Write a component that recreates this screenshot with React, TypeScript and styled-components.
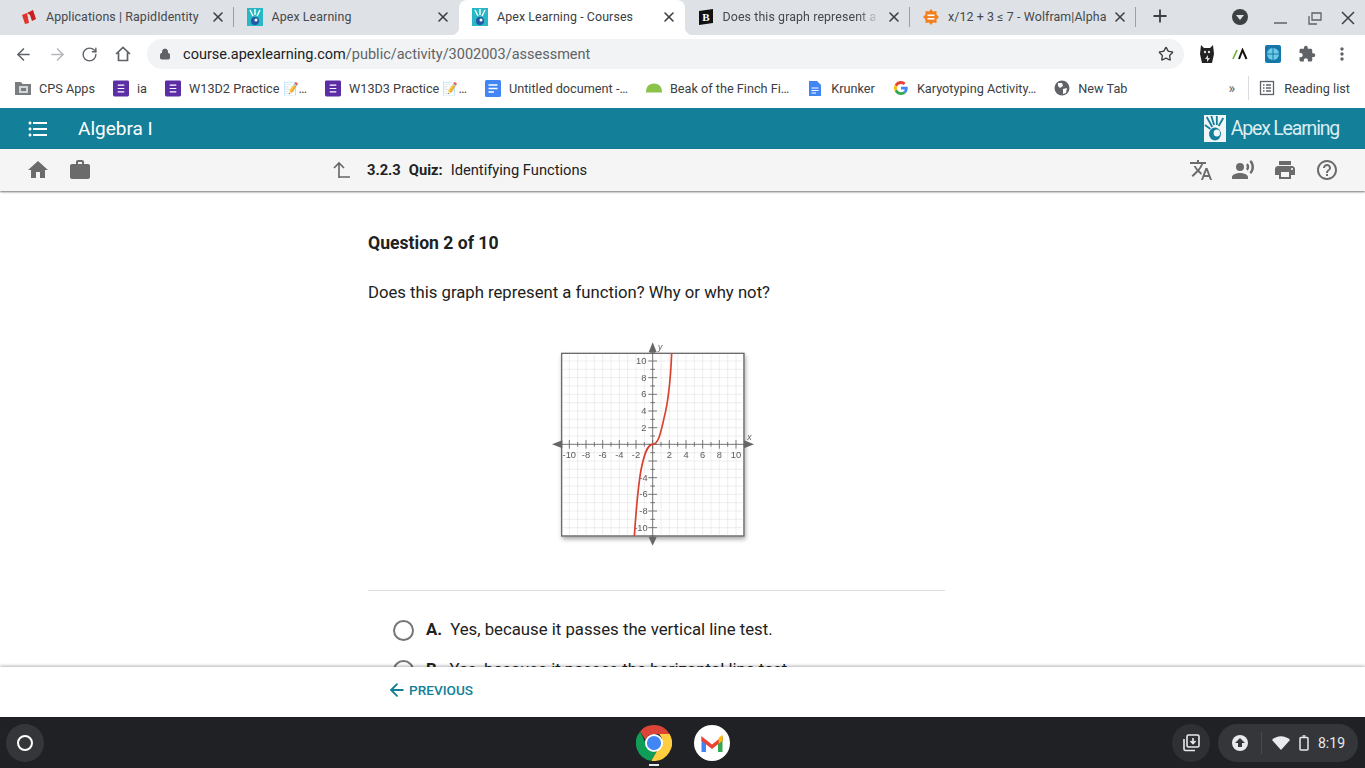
import styled, { createGlobalStyle } from 'styled-components';
import { ArrowLeft, ArrowRight, Lock, Plus, RotateCw, Star, X } from 'lucide-react';
import {
  MdExtension,
  MdFormatListBulleted,
  MdHelpOutline,
  MdHome,
  MdMoreVert,
  MdPrint,
  MdRecordVoiceOver,
  MdTranslate,
  MdWork,
} from 'react-icons/md';

const GlobalStyle = createGlobalStyle`
  html, body {
    margin: 0;
    height: 100%;
    overflow: hidden;
    background: #fff;
    font-family: Roboto, "Liberation Sans", sans-serif;
  }
`;

const Page = styled.div`
  display: flex;
  flex-direction: column;
  width: 1365px;
  height: 768px;
  overflow: hidden;
`;

/* chrome tabs */
const TabStrip = styled.div`
  display: flex;
  align-items: stretch;
  height: 35px;
  padding: 0 0 0 8px;
  background: #dee1e6;
  flex-shrink: 0;
`;

const Tab = styled.div<{ $active?: boolean }>`
  position: relative;
  display: flex;
  align-items: center;
  width: 225.5px;
  box-sizing: border-box;
  padding: 0 8px 2px 13px;
  gap: 8px;
  border-radius: 8px 8px 0 0;
  background: ${({ $active }) => ($active ? '#fff' : 'transparent')};
  color: ${({ $active }) => ($active ? '#3c4043' : '#45494d')};
  font-size: 12.4px;
  flex-shrink: 0;

  &::before,
  &::after {
    content: '';
    display: ${({ $active }) => ($active ? 'block' : 'none')};
    position: absolute;
    bottom: 0;
    width: 8px;
    height: 8px;
  }
  &::before {
    left: -8px;
    background: radial-gradient(circle at 0 0, transparent 8px, #fff 8.5px);
  }
  &::after {
    right: -8px;
    background: radial-gradient(circle at 100% 0, transparent 8px, #fff 8.5px);
  }
`;

const TabDivider = styled.span`
  position: absolute;
  top: 7px;
  right: 0;
  width: 1px;
  height: 20px;
  background: #9aa0a6;
`;

const Favicon = styled.span`
  display: flex;
  align-items: center;
  justify-content: center;
  width: 16px;
  height: 16px;
  flex-shrink: 0;
`;

const TabTitle = styled.span<{ $fade?: boolean }>`
  flex: 1;
  margin-left: 1px;
  white-space: nowrap;
  overflow: hidden;
  letter-spacing: 0.1px;
  ${({ $fade }) =>
    $fade ? 'mask-image: linear-gradient(90deg, #000 84%, transparent 97%);' : ''}
`;

const TabClose = styled(X)`
  width: 16px;
  height: 16px;
  margin-left: -6px;
  color: #3c4043;
  stroke-width: 2.4;
  flex-shrink: 0;
`;

const NewTab = styled(Plus)`
  width: 20px;
  height: 20px;
  margin: 6px 0 0 14px;
  color: #3c4043;
  stroke-width: 2.2;
`;

const WindowControls = styled.div`
  display: flex;
  align-items: center;
  margin-left: auto;
  padding: 0 9px 2px 0;
  gap: 25px;
`;

/* toolbar */
const Toolbar = styled.div`
  display: flex;
  align-items: center;
  height: 38px;
  padding: 0 13px 0 14px;
  background: #fff;
  flex-shrink: 0;
`;

const NavIcons = styled.div`
  display: flex;
  align-items: center;
  gap: 14.7px;
  color: #5f6368;
  margin-right: 14px;
`;

const Omnibox = styled.div`
  display: flex;
  align-items: center;
  flex: 1;
  height: 30px;
  padding: 0 10px 0 12px;
  border-radius: 15px;
  background: #f1f3f4;
  font-size: 14.5px;
  color: #5f6368;
`;

const UrlHost = styled.span`
  color: #202124;
`;

const UrlText = styled.span`
  flex: 1;
  margin-left: 12px;
`;

const Extensions = styled.div`
  display: flex;
  align-items: center;
  gap: 16px;
  margin-left: 14px;
  color: #5f6368;
`;

/* bookmarks */
const BookmarkBar = styled.div`
  display: flex;
  align-items: center;
  height: 35px;
  padding: 0 15px 5px 15px;
  box-sizing: border-box;
  background: #fff;
  font-size: 12.7px;
  color: #3c4043;
  flex-shrink: 0;
`;

const Bookmark = styled.div`
  display: flex;
  align-items: center;
  gap: 8px;
  margin-right: 18px;
  white-space: nowrap;
`;

const BookmarkIcon = styled.span`
  display: flex;
  align-items: center;
  justify-content: center;
  width: 16px;
  flex-shrink: 0;
`;

const BookmarkOverflow = styled.span`
  margin-left: auto;
  font-size: 14px;
  color: #5f6368;
`;

const ReadingList = styled.div`
  display: flex;
  align-items: center;
  gap: 9px;
  margin-left: 13px;
  padding-left: 10px;
  border-left: 1px solid #dadce0;
  height: 24px;
  color: #3c4043;
`;

/* apex app */
const AppBar = styled.header`
  display: flex;
  align-items: center;
  height: 41px;
  padding: 0 26px 0 26px;
  background: #137f98;
  color: #fff;
  flex-shrink: 0;
`;

const CourseTitle = styled.div`
  margin-left: 28px;
  font-size: 19px;
`;

const Logo = styled.div`
  display: flex;
  align-items: center;
  gap: 5px;
  margin-left: auto;
  font-size: 19.5px;
  letter-spacing: -1.2px;
  color: #dcecf0;
`;

const SubBar = styled.div`
  position: relative;
  z-index: 2;
  display: flex;
  align-items: center;
  height: 42px;
  padding: 0 26px;
  background: #f5f5f5;
  box-shadow: 0 1px 2px rgba(0, 0, 0, 0.55);
  color: #6b6b6b;
  flex-shrink: 0;
`;

const SubIcons = styled.div`
  display: flex;
  align-items: center;
  gap: 18px;
`;

const Crumb = styled.div`
  display: flex;
  align-items: center;
  margin-left: 239px;
  font-size: 14.7px;
  color: #212121;
`;

const CrumbStrong = styled.strong`
  font-weight: 700;
  margin-right: 8px;
`;

const CrumbUp = styled.svg`
  width: 20px;
  height: 20px;
  margin-right: 16px;
`;

const SubActions = styled.div`
  display: flex;
  align-items: center;
  gap: 18px;
  margin-left: auto;
`;

const Content = styled.main`
  flex: 1;
  min-height: 0;
  overflow: hidden;
  padding-left: 368px;
  background: #fff;
  color: #212121;
`;

const Column = styled.div`
  width: 577px;
`;

const Heading = styled.h2`
  margin: 40px 0 0;
  font-size: 17.6px;
  line-height: 24px;
  font-weight: 700;
`;

const Prompt = styled.p`
  margin: 26px 0 0;
  font-size: 16.7px;
  line-height: 24px;
`;

const Graph = styled.svg`
  display: block;
  width: 225px;
  height: 220px;
  margin: 30px 0 0 172px;
`;

const Rule = styled.hr`
  margin: 35px 0 0;
  border: 0;
  border-top: 1px solid #ddd;
`;

const Option = styled.div`
  display: flex;
  align-items: center;
  height: 24px;
  margin: 0 0 16px 25px;
  font-size: 16.75px;

  &:first-of-type {
    margin-top: 26px;
  }
`;

const Radio = styled.span`
  width: 17px;
  height: 17px;
  margin-right: 12px;
  border: 2px solid #757575;
  border-radius: 50%;
  flex-shrink: 0;
  position: relative;
  top: 1px;
`;

const OptionLetter = styled.strong`
  margin-right: 8px;
  font-weight: 700;
`;

const Footer = styled.footer`
  position: relative;
  z-index: 2;
  display: flex;
  align-items: center;
  height: 50px;
  padding: 0 0 4px 387px;
  box-sizing: border-box;
  background: #fff;
  box-shadow: 0 -1px 3px rgba(0, 0, 0, 0.3);
  flex-shrink: 0;
`;

const PrevButton = styled.div`
  display: flex;
  align-items: center;
  gap: 2px;
  color: #137f98;
  font-size: 13.6px;
  font-weight: 500;
`;

/* chromeos shelf */
const Shelf = styled.div`
  display: grid;
  grid-template-columns: 1fr auto 1fr;
  align-items: center;
  height: 51px;
  padding: 0 7px 0 6px;
  box-sizing: border-box;
  background: #202124;
  flex-shrink: 0;
`;

const Launcher = styled.div`
  display: flex;
  align-items: center;
  justify-content: center;
  width: 38px;
  height: 38px;
  border-radius: 50%;
  background: #35363a;
`;

const LauncherRing = styled.span`
  width: 12px;
  height: 12px;
  border: 2px solid #fff;
  border-radius: 50%;
`;

const ShelfApps = styled.div`
  position: relative;
  display: flex;
  align-items: center;
  gap: 22px;
  margin-left: 1px;
`;

const RunningDot = styled.span`
  position: absolute;
  left: 13px;
  bottom: -5px;
  width: 10px;
  height: 2px;
  background: #e8eaed;
`;

const Tray = styled.div`
  display: flex;
  align-items: center;
  justify-content: flex-end;
  gap: 8px;
`;

const HoldingSpace = styled.div`
  display: flex;
  align-items: center;
  justify-content: center;
  width: 38px;
  height: 38px;
  border-radius: 50%;
  background: #2f3033;
`;

const StatusPill = styled.div`
  display: flex;
  align-items: center;
  gap: 9px;
  height: 38px;
  padding: 0 13px;
  border-radius: 19px;
  background: #35363a;
  color: #e8eaed;
  font-size: 14px;
`;

const PillDivider = styled.span`
  width: 1px;
  height: 22px;
  margin: 0 1px 0 3px;
  background: #4a4b4f;
`;

const RapidIcon = () => (
  <svg width="16" height="16" viewBox="0 0 16 16">
    <path d="M1 6 L6 4 L8 14 L4 15 Z" fill="#e0342b" />
    <path d="M6 4 L12 1 L15 10 L11 12 L9 6 Z" fill="#c91f1f" />
  </svg>
);

const ApexIcon = () => (
  <svg width="16" height="18" viewBox="0 0 16 18">
    <rect width="16" height="18" fill="#2ab7c4" />
    <path d="M3 2 L6 8 M8 1 L8 7 M13 2 L10 8" stroke="#fff" strokeWidth="1.4" />
    <circle cx="8" cy="13" r="4" fill="#2457a6" />
    <circle cx="9" cy="12" r="1.5" fill="#fff" />
  </svg>
);

const BrainlyIcon = () => (
  <svg width="16" height="16" viewBox="0 0 16 16">
    <path d="M1 2 L15 0 L15 14 L1 16 Z" fill="#111" />
    <text x="8" y="12" fontSize="11" fontWeight="700" textAnchor="middle" fill="#fff" fontFamily="Liberation Serif, serif">
      B
    </text>
  </svg>
);

const WolframIcon = () => (
  <svg width="16" height="16" viewBox="0 0 16 16">
    <path
      d="M8 0 L10 2.5 L13.5 2 L13.5 5.5 L16 8 L13.5 10.5 L13.5 14 L10 13.5 L8 16 L6 13.5 L2.5 14 L2.5 10.5 L0 8 L2.5 5.5 L2.5 2 L6 2.5 Z"
      fill="#f0801f"
    />
    <rect x="4.5" y="5.5" width="7" height="1.6" fill="#fff" />
    <rect x="4.5" y="9" width="7" height="1.6" fill="#fff" />
  </svg>
);

const ProfileDown = () => (
  <svg width="18" height="18" viewBox="0 0 18 18">
    <circle cx="9" cy="9" r="8" fill="#3c4043" />
    <path d="M5 7 H13 L9 12 Z" fill="#dee1e6" />
  </svg>
);

const WindowButtons = () => (
  <svg width="82" height="16" viewBox="0 0 82 16" fill="none" stroke="#5f6368" strokeWidth="1.5">
    <path d="M0 14 H13" />
    <path d="M35 7 V15 H43 M38 11 V4 H47 V11 Z" strokeWidth="1.3" />
    <path d="M68 3 L80 15 M80 3 L68 15" stroke="#3c4043" />
  </svg>
);

const HomeOutline = () => (
  <svg width="20" height="20" viewBox="0 0 20 20" fill="none" stroke="#5f6368" strokeWidth="1.7">
    <path d="M3 10 L10 3.5 L17 10 M5.5 8.5 V16.5 H14.5 V8.5" />
  </svg>
);

const BearExt = () => (
  <svg width="18" height="20" viewBox="0 0 18 20">
    <path d="M3 1 L6 4 H12 L15 1 L16 10 L14 19 H4 L2 10 Z" fill="#222" />
    <circle cx="7" cy="8" r="1.2" fill="#ddd" />
    <circle cx="11" cy="8" r="1.2" fill="#ddd" />
    <path d="M7 15 L10 11 L10 14 L12 14 L9 18 L9 15 Z" fill="#ddd" />
  </svg>
);

const SlashExt = () => (
  <svg width="16" height="12" viewBox="0 0 16 12">
    <path d="M1 11 L5 2" stroke="#7cb342" strokeWidth="1.8" />
    <path d="M7 11 L10.5 2 L14.5 11" stroke="#111" strokeWidth="2" fill="none" />
  </svg>
);

const GlobeExt = () => (
  <svg width="18" height="20" viewBox="0 0 18 20">
    <rect x="1" y="1" width="16" height="18" rx="2" fill="#1678a8" />
    <circle cx="9" cy="10" r="6" fill="#6ecbe8" />
    <path d="M3 10 H15 M9 4 V16" stroke="#1678a8" />
  </svg>
);

const SheetIcon = ({ color }: { color: string }) => (
  <svg width="17" height="17" viewBox="0 0 17 17">
    <rect width="17" height="17" rx="1.5" fill={color} />
    <path d="M5 5 H12 M5 8.5 H12 M5 12 H12" stroke="#fff" strokeWidth="1.3" />
  </svg>
);

const DocIcon = () => (
  <svg width="16" height="17" viewBox="0 0 16 17">
    <rect width="16" height="17" rx="1.5" fill="#4285f4" />
    <path d="M3.5 5 H12.5 M3.5 8.5 H12.5 M3.5 12 H9" stroke="#fff" strokeWidth="1.5" />
  </svg>
);

const DocSmall = () => (
  <svg width="12" height="16" viewBox="0 0 12 16">
    <path d="M0 1 H8 L12 5 V16 H0 Z" fill="#4285f4" />
    <path d="M2.5 8 H9.5 M2.5 10.5 H9.5 M2.5 13 H7" stroke="#fff" />
  </svg>
);

const FolderIcon = () => (
  <svg width="16" height="14" viewBox="0 0 16 14">
    <path d="M0 1 H6 L7.5 3 H16 V14 H0 Z" fill="#7a7d80" />
    <rect x="4" y="5" width="9" height="7" fill="#d4d5d6" />
    <rect x="6" y="7" width="5" height="3" fill="#7a7d80" />
  </svg>
);

const FinchIcon = () => (
  <svg width="18" height="10" viewBox="0 0 18 10">
    <path d="M0 10 C0 3 4 0 9 0 C14 0 18 3 18 10 Z" fill="#8bc34a" />
  </svg>
);

const GoogleIcon = () => (
  <svg width="14" height="14" viewBox="0 0 48 48">
    <path fill="#ea4335" d="M24 10c3.5 0 6.700 1.300 9.100 3.500l6.800-6.800C35.600 2.800 30.100 0 24 0 14.600 0 6.500 5.400 2.600 13.200l7.900 6.100C12.400 13.800 17.700 10 24 10z" />
    <path fill="#4285f4" d="M47 24.500c0-1.600-.1-3.100-.4-4.500H24v9h13c-.6 3-2.300 5.500-4.800 7.200l7.700 6C44.300 37.900 47 31.700 47 24.500z" />
    <path fill="#fbbc05" d="M10.500 28.700C10 27.200 9.700 25.600 9.700 24s.3-3.200.8-4.700l-7.900-6.100C.9 16.500 0 20.100 0 24s.9 7.500 2.600 10.800l7.900-6.100z" />
    <path fill="#34a853" d="M24 48c6.500 0 11.900-2.100 15.900-5.800l-7.700-6c-2.200 1.400-4.900 2.300-8.200 2.300-6.300 0-11.600-3.800-13.500-9.800l-7.900 6.100C6.500 42.600 14.600 48 24 48z" />
  </svg>
);

const GlobeIcon = () => (
  <svg width="16" height="16" viewBox="0 0 16 16">
    <circle cx="8" cy="8" r="7.500" fill="#5f6368" />
    <path d="M4 3 L8 3 L9 6 L6 8 L4 6 Z M9 9 L13 8 L12 13 L9 14 Z" fill="#fff" />
  </svg>
);

const ListBox = () => (
  <svg width="16" height="16" viewBox="0 0 16 16" fill="none" stroke="#5f6368" strokeWidth="1.3">
    <rect x="1.500" y="1.500" width="13" height="13" />
    <path d="M4 5 H5.500 M7 5 H12 M4 8 H5.500 M7 8 H12 M4 11 H5.500 M7 11 H12" />
  </svg>
);

const ApexHand = () => (
  <svg width="22" height="27" viewBox="0 0 24 27" preserveAspectRatio="none">
    <rect width="24" height="27" fill="#f0f6f7" />
    <path d="M3 2 L9 12 M8 1 L11 10 M14 1 L14 10 M21 3 L16 11 M1 10 L7 14" stroke="#137f98" strokeWidth="2" />
    <circle cx="12" cy="19" r="6.500" fill="#137f98" />
    <circle cx="14" cy="18" r="3.500" fill="#f0f6f7" />
  </svg>
);

const GRID_VALUES = Array.from({ length: 23 }, (_, i) => i - 11);
const LABELS = [-10, -8, -6, -4, -2, 2, 4, 6, 8, 10];

const PlotGraph = () => (
  <Graph viewBox="0 0 675 660">
    <defs>
      <filter id="soft" x="-10%" y="-10%" width="120%" height="125%">
        <feDropShadow dx="3" dy="8" stdDeviation="7" floodColor="#000" floodOpacity="0.35" />
      </filter>
      <filter id="blur">
        <feGaussianBlur stdDeviation="1.1" />
      </filter>
    </defs>
    <rect x="65" y="55" width="547" height="548" fill="#fff" stroke="#666" strokeWidth="3" filter="url(#soft)" />
    {GRID_VALUES.map((v) => (
      <g key={v} stroke="#dcdcdc" strokeWidth="1.5">
        <line x1={338 + v * 25} y1="55" x2={338 + v * 25} y2="603" />
        <line x1="65" y1={328 + v * 25} x2="612" y2={328 + v * 25} />
      </g>
    ))}
    <rect x="65" y="55" width="547" height="548" fill="none" stroke="#666" strokeWidth="3" />
    <g stroke="#666" strokeWidth="2.6" filter="url(#blur)">
      <line x1="55" y1="328" x2="620" y2="328" />
      <line x1="338" y1="45" x2="338" y2="612" />
      {GRID_VALUES.map((v) => (
        <g key={v}>
          <line x1={338 + v * 25} y1={v % 2 === 0 ? 315 : 321} x2={338 + v * 25} y2={v % 2 === 0 ? 341 : 335} />
          <line x1={v % 2 === 0 ? 325 : 331} y1={328 + v * 25} x2={v % 2 === 0 ? 351 : 345} y2={328 + v * 25} />
        </g>
      ))}
    </g>
    <g fill="#666" filter="url(#blur)">
      <path d="M36 328 L67 316 L67 340 Z" />
      <path d="M642 328 L612 316 L612 340 Z" />
      <path d="M338 22 L326 52 L350 52 Z" />
      <path d="M338 632 L326 606 L350 606 Z" />
    </g>
    <g fontFamily="Liberation Sans, sans-serif" fontSize="28" fill="#5c5c5c" filter="url(#blur)">
      {LABELS.map((v) => (
        <text key={`x${v}`} x={338 + v * 25} y="369" textAnchor="middle">
          {v}
        </text>
      ))}
      {LABELS.map((v) => (
        <text key={`y${v}`} x={v > 0 ? 319 : 323} y={337 - v * 25} textAnchor="end">
          {v === -2 ? '' : v}
        </text>
      ))}
      <text x="622" y="314" fontSize="26" fontStyle="italic">x</text>
      <text x="354" y="46" fontSize="26" fontStyle="italic">y</text>
    </g>
    <path
      d="M395 55 C392 130 385 200 372 250 C362 295 355 327 338 328 C322 329 313 355 303 405 C295 450 288 530 283 603"
      fill="none"
      stroke="#d8412f"
      strokeWidth="5"
    />
  </Graph>
);

const ChromeLogo = () => (
  <svg width="36" height="36" viewBox="0 0 48 48">
    <path fill="#db4437" d="M24 0a24 24 0 0 1 20.800 12H24a12 12 0 0 0-11.300 8L5.500 8.500A24 24 0 0 1 24 0z" />
    <path fill="#0f9d58" d="M5.500 8.500L15.800 30.300a12 12 0 0 0 11.500 5.300L20.500 47.700A24 24 0 0 1 5.500 8.500z" />
    <path fill="#ffcd40" d="M44.800 12A24 24 0 0 1 20.500 47.700l10.300-18a12 12 0 0 0 0-17.700z" />
    <circle cx="24" cy="24" r="12" fill="#fff" />
    <circle cx="24" cy="24" r="9.500" fill="#4285f4" />
  </svg>
);

const GmailLogo = () => (
  <svg width="36" height="36" viewBox="0 0 48 48">
    <circle cx="24" cy="24" r="24" fill="#fff" />
    <path d="M10 15 V36 H16 V21 Z" fill="#4285f4" />
    <path d="M38 15 V36 H32 V21 Z" fill="#34a853" />
    <path d="M10 15 L24 26 L38 15 V21 L24 32 L10 21 Z" fill="#ea4335" />
    <path d="M33 17 L38 13 V21 L33 25 Z" fill="#fbbc04" />
  </svg>
);

const HoldingIcon = () => (
  <svg width="20" height="20" viewBox="0 0 20 20" fill="none" stroke="#e8eaed" strokeWidth="1.6">
    <rect x="6" y="2" width="12" height="12" rx="1.500" />
    <path d="M3 6 V16 a1.500 1.500 0 0 0 1.500 1.500 H14" />
    <path d="M12 5 V10 M9.500 8 L12 10.500 L14.500 8" />
  </svg>
);

const UploadDot = () => (
  <svg width="18" height="18" viewBox="0 0 18 18">
    <circle cx="9" cy="9" r="8" fill="#e8eaed" />
    <path d="M9 4 L14 9 H11 V13 H7 V9 H4 Z" fill="#35363a" />
  </svg>
);

const WifiIcon = () => (
  <svg width="18" height="14" viewBox="0 0 18 14">
    <path d="M0 4 C5 -1 13 -1 18 4 L9 14 Z" fill="#e8eaed" />
  </svg>
);

const BatteryIcon = () => (
  <svg width="10" height="16" viewBox="0 0 10 16" fill="none" stroke="#e8eaed" strokeWidth="1.500">
    <rect x="1" y="2.500" width="8" height="12.500" rx="1" />
    <path d="M3.500 1 H6.500" />
  </svg>
);

const TABS = [
  { title: 'Applications | RapidIdentity', icon: <RapidIcon />, divider: true },
  { title: 'Apex Learning', icon: <ApexIcon /> },
  { title: 'Apex Learning - Courses', icon: <ApexIcon />, active: true },
  { title: 'Does this graph represent a', icon: <BrainlyIcon />, divider: true, fade: true },
  { title: 'x/12 + 3 ≤ 7 - Wolfram|Alpha', icon: <WolframIcon />, divider: true },
];

const BOOKMARKS = [
  { label: 'CPS Apps', icon: <FolderIcon /> },
  { label: 'ia', icon: <SheetIcon color="#5b2ea6" /> },
  { label: 'W13D2 Practice 📝…', icon: <SheetIcon color="#5b2ea6" /> },
  { label: 'W13D3 Practice 📝…', icon: <SheetIcon color="#5b2ea6" /> },
  { label: 'Untitled document -…', icon: <DocIcon /> },
  { label: 'Beak of the Finch Fi…', icon: <FinchIcon /> },
  { label: 'Krunker', icon: <DocSmall /> },
  { label: 'Karyotyping Activity…', icon: <GoogleIcon /> },
  { label: 'New Tab', icon: <GlobeIcon /> },
];

export default function App() {
  return (
    <Page>
      <GlobalStyle />
      <TabStrip>
        {TABS.map((tab) => (
          <Tab key={tab.title} $active={tab.active}>
            <Favicon>{tab.icon}</Favicon>
            <TabTitle $fade={tab.fade}>{tab.title}</TabTitle>
            <TabClose />
            {tab.divider && <TabDivider />}
          </Tab>
        ))}
        <NewTab />
        <WindowControls>
          <ProfileDown />
          <WindowButtons />
        </WindowControls>
      </TabStrip>

      <Toolbar>
        <NavIcons>
          <ArrowLeft size={19} />
          <ArrowRight size={19} color="#b5b7ba" />
          <RotateCw size={17} />
          <HomeOutline />
        </NavIcons>
        <Omnibox>
          <Lock size={12} fill="#5f6368" />
          <UrlText>
            <UrlHost>course.apexlearning.com</UrlHost>/public/activity/3002003/assessment
          </UrlText>
          <Star size={16} color="#3c4043" />
        </Omnibox>
        <Extensions>
          <BearExt />
          <SlashExt />
          <GlobeExt />
          <MdExtension size={18} />
          <MdMoreVert size={20} />
        </Extensions>
      </Toolbar>

      <BookmarkBar>
        {BOOKMARKS.map((item) => (
          <Bookmark key={item.label}>
            <BookmarkIcon>{item.icon}</BookmarkIcon>
            {item.label}
          </Bookmark>
        ))}
        <BookmarkOverflow>»</BookmarkOverflow>
        <ReadingList>
          <ListBox />
          Reading list
        </ReadingList>
      </BookmarkBar>

      <AppBar>
        <MdFormatListBulleted size={24} />
        <CourseTitle>Algebra I</CourseTitle>
        <Logo>
          <ApexHand />
          Apex Learning
        </Logo>
      </AppBar>

      <SubBar>
        <SubIcons>
          <MdHome size={24} />
          <MdWork size={24} />
        </SubIcons>
        <Crumb>
          <CrumbUp viewBox="0 0 20 20" fill="none" stroke="#666" strokeWidth="1.6">
            <path d="M8 18 V3 M3 8 L8 3 L13 8 M8 17 H19" />
          </CrumbUp>
          <CrumbStrong>3.2.3</CrumbStrong>
          <CrumbStrong>Quiz:</CrumbStrong>
          Identifying Functions
        </Crumb>
        <SubActions>
          <MdTranslate size={24} />
          <MdRecordVoiceOver size={24} />
          <MdPrint size={24} />
          <MdHelpOutline size={24} />
        </SubActions>
      </SubBar>

      <Content>
        <Column>
          <Heading>Question 2 of 10</Heading>
          <Prompt>Does this graph represent a function? Why or why not?</Prompt>
          <PlotGraph />
          <Rule />
          <Option>
            <Radio />
            <OptionLetter>A.</OptionLetter>
            Yes, because it passes the vertical line test.
          </Option>
          <Option>
            <Radio />
            <OptionLetter>B.</OptionLetter>
            Yes, because it passes the horizontal line test.
          </Option>
        </Column>
      </Content>

      <Footer>
        <PrevButton>
          <ArrowLeft size={20} strokeWidth={2.2} />
          PREVIOUS
        </PrevButton>
      </Footer>

      <Shelf>
        <Launcher>
          <LauncherRing />
        </Launcher>
        <ShelfApps>
          <ChromeLogo />
          <RunningDot />
          <GmailLogo />
        </ShelfApps>
        <Tray>
          <HoldingSpace>
            <HoldingIcon />
          </HoldingSpace>
          <StatusPill>
            <UploadDot />
            <PillDivider />
            <WifiIcon />
            <BatteryIcon />
            8:19
          </StatusPill>
        </Tray>
      </Shelf>
    </Page>
  );
}
